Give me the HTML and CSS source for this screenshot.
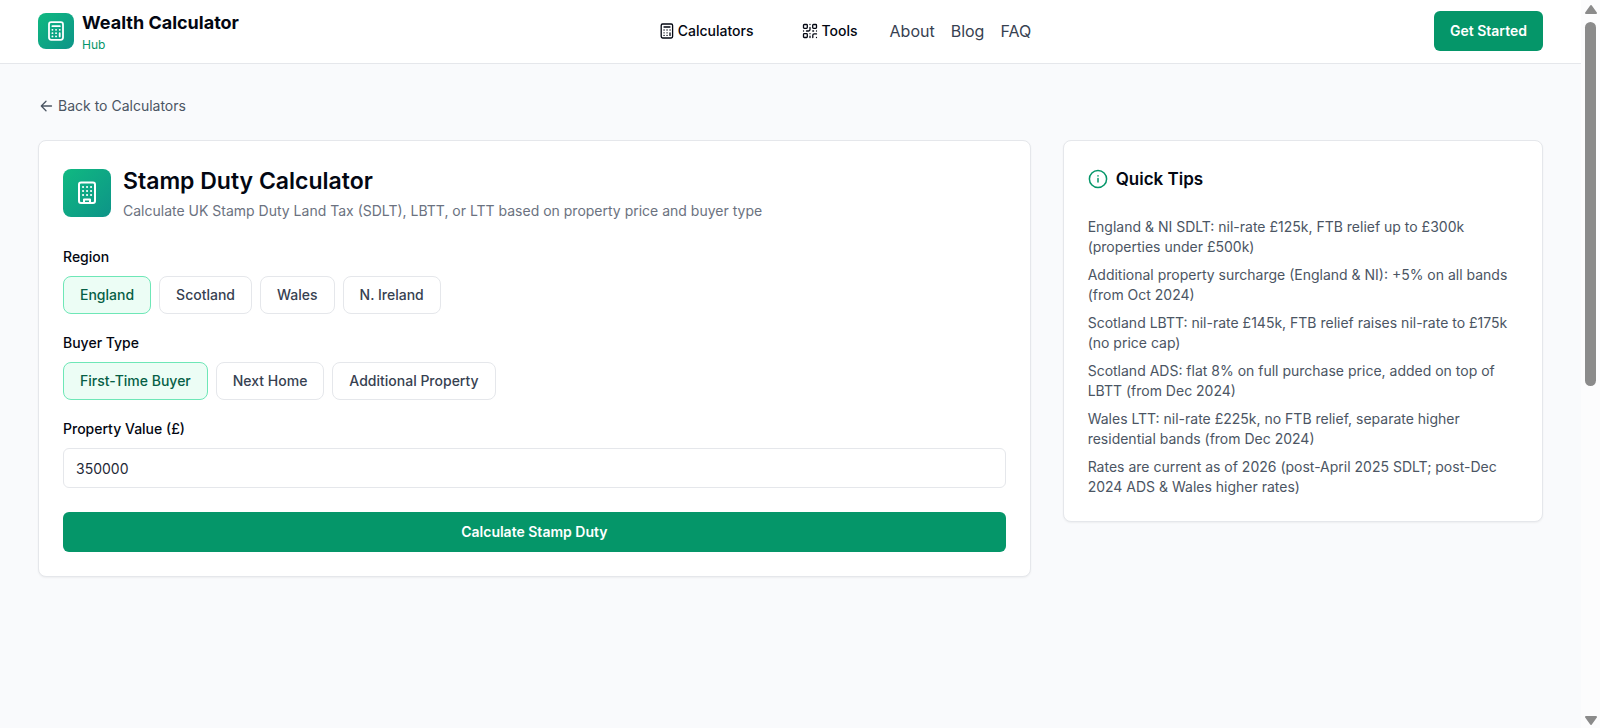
FILE: index.html
```html
<!DOCTYPE html>
<html lang="en">
<head>
<meta charset="utf-8">
<meta name="viewport" content="width=device-width, initial-scale=1">
<title>Stamp Duty Calculator | Wealth Calculator Hub</title>
<link rel="stylesheet" href="styles.css">
</head>
<body>
<div class="page">
  <header class="site-header">
    <a class="brand" href="#">
      <span class="brand-icon">
        <svg width="20" height="20" viewBox="0 0 20 20" fill="none" stroke="currentColor" stroke-width="1.8" stroke-linecap="round" stroke-linejoin="round"><rect x="3" y="1.2" width="14" height="17.6" rx="2.2"/><path d="M6.4 5.2h7.4M6.4 8.8h.1M10 8.8h.1M13.7 8.8h.1M6.4 12.2h.1M10 12.2h.1M6.4 15.4h.1M10 15.4h.1M13.7 12.2v3.2"/></svg>
      </span>
      <span class="brand-text"><span class="brand-name">Wealth Calculator</span><span class="brand-sub">Hub</span></span>
    </a>
    <nav class="nav">
      <button class="nav-button" type="button">
        <svg width="14" height="16" viewBox="0 0 14 16" fill="none" stroke="currentColor" stroke-width="1.3" stroke-linecap="round" stroke-linejoin="round"><rect x="1.2" y="1" width="11.4" height="14" rx="1.4"/><path d="M4 4h6M4 7h.1M7 7h.1M10 7h.1M4 9.8h.1M7 9.8h.1M4 12.4h.1M7 12.4h.1M10 9.8v2.6"/></svg>
        Calculators
      </button>
      <button class="nav-button" type="button">
        <svg width="16" height="16" viewBox="0 0 16 16" fill="none" stroke="currentColor" stroke-width="1.3" stroke-linecap="round" stroke-linejoin="round"><rect x="1.5" y="1.5" width="3.8" height="3.8" rx=".8"/><rect x="10.7" y="1.5" width="3.8" height="3.8" rx=".8"/><rect x="1.5" y="10.7" width="3.8" height="3.8" rx=".8"/><path d="M8 1.5v.1M8 4.4v2.2a1.4 1.4 0 0 1-1.4 1.4H4.5M1.5 8h.1M8 10.6v.1M8 14.5v-1.3M10.8 8h.8M14.5 8v.1M10.8 14.5v-2.2a1.4 1.4 0 0 1 1.4-1.4h2.3M14.5 14.4v.1"/></svg>
        Tools
      </button>
      <a class="nav-link" href="#">About</a>
      <a class="nav-link" href="#">Blog</a>
      <a class="nav-link" href="#">FAQ</a>
    </nav>
    <button class="primary" type="button">Get Started</button>
  </header>

  <main class="main">
    <a class="back" href="#">
      <svg width="16" height="16" viewBox="0 0 16 16" fill="none" stroke="currentColor" stroke-width="1.3" stroke-linecap="round" stroke-linejoin="round"><path d="M13.5 8h-10M8 3.3 3.3 8 8 12.7"/></svg>
      Back to Calculators
    </a>
    <div class="columns">
      <section class="card calculator">
        <div class="card-head">
          <span class="card-icon">
            <svg width="24" height="24" viewBox="0 0 24 24" fill="none" stroke="currentColor" stroke-width="2" stroke-linecap="round" stroke-linejoin="round"><rect x="4" y="1.5" width="16" height="20.5" rx="2"/><path d="M9 22v-3.5h6V22M8 6h.1M12 6h.1M16 6h.1M8 10h.1M12 10h.1M16 10h.1M8 14h.1M12 14h.1M16 14h.1"/></svg>
          </span>
          <div>
            <h1 class="title">Stamp Duty Calculator</h1>
            <p class="subtitle">Calculate UK Stamp Duty Land Tax (SDLT), LBTT, or LTT based on property price and buyer type</p>
          </div>
        </div>
        <form class="form">
          <div class="field" role="group" aria-labelledby="region-label">
            <span class="label" id="region-label">Region</span>
            <div class="options">
              <button class="option selected" type="button" aria-pressed="true">England</button>
              <button class="option" type="button">Scotland</button>
              <button class="option" type="button">Wales</button>
              <button class="option" type="button">N. Ireland</button>
            </div>
          </div>
          <div class="field" role="group" aria-labelledby="buyer-label">
            <span class="label" id="buyer-label">Buyer Type</span>
            <div class="options">
              <button class="option selected" type="button" aria-pressed="true">First-Time Buyer</button>
              <button class="option" type="button">Next Home</button>
              <button class="option" type="button">Additional Property</button>
            </div>
          </div>
          <div class="field">
            <label class="label" for="value">Property Value (£)</label>
            <input class="input" id="value" type="text" inputmode="numeric" value="350000">
          </div>
          <button class="primary submit" type="button">Calculate Stamp Duty</button>
        </form>
      </section>
      <aside class="card">
        <h2 class="tips-title">
          <svg width="20" height="20" viewBox="0 0 20 20" fill="none" stroke="currentColor" stroke-width="1.5" stroke-linecap="round"><circle cx="10" cy="10" r="8.6"/><path d="M10 9.4V13M10 6.8v.1"/></svg>
          Quick Tips
        </h2>
        <ul class="tips">
          <li>England &amp; NI SDLT: nil-rate £125k, FTB relief up to £300k (properties under £500k)</li>
          <li>Additional property surcharge (England &amp; NI): +5% on all bands (from Oct 2024)</li>
          <li>Scotland LBTT: nil-rate £145k, FTB relief raises nil-rate to £175k (no price cap)</li>
          <li>Scotland ADS: flat 8% on full purchase price, added on top of LBTT (from Dec 2024)</li>
          <li>Wales LTT: nil-rate £225k, no FTB relief, separate higher residential bands (from Dec 2024)</li>
          <li>Rates are current as of 2026 (post-April 2025 SDLT; post-Dec 2024 ADS &amp; Wales higher rates)</li>
        </ul>
      </aside>
    </div>
  </main>
</div>
<div class="scrollbar" aria-hidden="true">
  <svg width="12" height="10" viewBox="0 0 12 10" fill="currentColor" stroke="currentColor" stroke-width="2" stroke-linejoin="round"><path d="M6 2 11 9H1z"/></svg>
  <div class="track"><div class="thumb"></div></div>
  <svg width="12" height="10" viewBox="0 0 12 10" fill="currentColor" stroke="currentColor" stroke-width="2" stroke-linejoin="round"><path d="M6 8 11 1H1z"/></svg>
</div>
</body>
</html>
```
FILE: styles.css
```css
* { box-sizing: border-box; }
body {
  margin: 0;
  height: 100vh;
  display: flex;
  overflow: hidden;
  background: #fcfcfd;
  color: #030712;
  font-family: Inter, "Liberation Sans", sans-serif;
  font-size: 14px;
  line-height: 20px;
}
button, input { font: inherit; color: inherit; }
button { cursor: pointer; }
a { color: inherit; text-decoration: none; }
h1, h2, p, ul { margin: 0; padding: 0; }
svg { flex: none; display: block; }

.page { flex: 1; min-width: 0; background: #f9fafc; }
.site-header {
  display: flex;
  align-items: center;
  justify-content: space-between;
  height: 64px;
  padding: 0 38px 2px;
  background: #fff;
  border-bottom: 1px solid #e5e7eb;
}
.brand { display: flex; align-items: center; gap: 8px; }
.brand-icon, .card-icon {
  display: grid;
  place-items: center;
  flex: none;
  width: 36px;
  height: 36px;
  border-radius: 8px;
  color: #fff;
  background: linear-gradient(135deg, #10b981, #0d9488);
}
.brand-text { display: flex; flex-direction: column; }
.brand-name { font-size: 18px; line-height: 28px; font-weight: 700; }
.brand-sub { font-size: 12px; line-height: 16px; color: #059669; }

.nav { display: flex; align-items: center; gap: 16px; padding-left: 2px; }
.nav-button {
  display: flex;
  align-items: center;
  gap: 4px;
  padding: 8px 16px;
  border: 0;
  background: none;
  font-weight: 500;
}
.nav-link { font-size: 16px; line-height: 24px; color: #374151; }

.primary {
  height: 40px;
  padding: 0 16px;
  border: 0;
  border-radius: 6px;
  background: #059669;
  color: #fff;
  font-weight: 600;
}

.main { padding: 32px 38px; }
.back { display: inline-flex; align-items: center; gap: 4px; color: #4b5563; }
.columns {
  display: grid;
  grid-template-columns: repeat(3, 1fr);
  gap: 32px;
  align-items: start;
  margin-top: 21px;
}
.card {
  padding: 24px;
  border: 1px solid #e5e7eb;
  border-radius: 8px;
  background: #fff;
  box-shadow: 0 1px 2px rgba(0, 0, 0, 0.05);
}
.calculator { grid-column: span 2; }
.card-head { display: flex; align-items: center; gap: 12px; }
.card-icon { width: 48px; height: 48px; }
.title { font-size: 23px; line-height: 32px; font-weight: 600; margin-bottom: 4px; }
.subtitle { color: #6b7280; }

.form { display: flex; flex-direction: column; gap: 18px; margin-top: 25px; }
.field { display: flex; flex-direction: column; gap: 8px; }
.label { line-height: 22px; font-weight: 500; }
.options { display: flex; flex-wrap: wrap; gap: 8px; }
.option {
  height: 38px;
  padding: 0 16px;
  border: 1px solid #e5e7eb;
  border-radius: 8px;
  background: #fff;
  color: #374151;
  font-weight: 500;
}
.selected { border-color: #6ee7b7; background: #ecfdf5; color: #065f46; }
.input {
  width: 100%;
  height: 40px;
  padding: 0 12px;
  border: 1px solid #e5e7eb;
  border-radius: 6px;
  background: #fff;
  color: #1f2937;
}
.submit { margin-top: 6px; }

.tips-title {
  display: flex;
  align-items: center;
  gap: 8px;
  margin-bottom: 24px;
  font-size: 17px;
  line-height: 28px;
  font-weight: 600;
}
.tips-title svg { color: #059669; }
.tips { display: flex; flex-direction: column; gap: 8px; list-style: none; color: #4b5563; }

.scrollbar {
  display: flex;
  flex-direction: column;
  align-items: center;
  gap: 8px;
  width: 19px;
  padding: 4px 0 2px;
  color: #8b8b8b;
}
.track { flex: 1; width: 11px; }
.thumb { height: 53%; border-radius: 6px; background: #8b8b8b; }
```
